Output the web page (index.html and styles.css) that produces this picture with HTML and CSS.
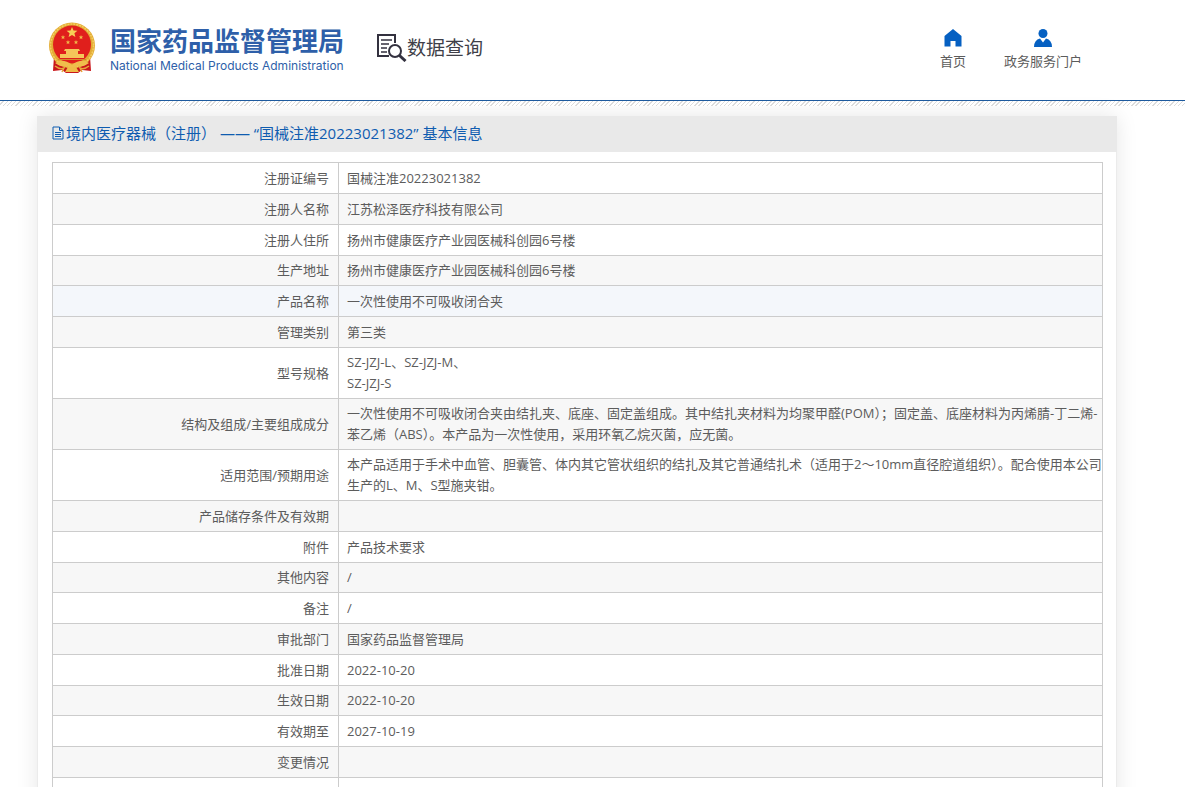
FILE: index.html
```html
<!DOCTYPE html>
<html lang="zh-CN">

<head>
    <meta charset="UTF-8">
    <meta name="viewport" content="width=device-width, initial-scale=1.0">
    <title>国家药品监督管理局 数据查询</title>
    <link rel="stylesheet" href="styles.css">
</head>

<body>
    <header class="header">
        <div class="logo">
            <svg class="emblem" viewBox="0 0 48 52" aria-hidden="true">
                <path d="M6 34 L5 49 L14 48 L18 51 L30 51 L34 48 L43 49 L42 34 Z" fill="#c9161b"/>
                <circle cx="24" cy="23.500" r="23" fill="#e3ab35"/>
                <circle cx="24" cy="23.500" r="21.500" fill="none" stroke="#f3cf62" stroke-width="1.500" stroke-dasharray="2 1"/>
                <circle cx="24" cy="22.500" r="19" fill="#e01f1c"/>
                <path d="M24 5l1.500 3.600 3.900.2-3 2.500 1 3.800-3.400-2.200-3.400 2.200 1-3.800-3-2.500 3.900-.2z" fill="#f7cf56"/>
                <g fill="#f0b848">
                    <path id="star" d="M15 13l.6 1.500 1.600.1-1.200 1 .4 1.600-1.400-.9-1.400.9.4-1.600-1.200-1 1.600-.1z"/>
                    <use href="#star" x="18"/>
                    <use href="#star" x="5" y="5"/>
                    <use href="#star" x="13" y="5"/>
                </g>
                <path d="M17 27h14l1 2H16zM18 29h12v3H18zM12 32h24v4H12z" fill="#f5c65a"/>
                <path d="M10 37.500h28" stroke="#d58a2b" stroke-width="1"/>
                <path d="M11 39q7-1 13 4 6-5 13-4l4 2q-7 5-12 3l-5 3-5-3q-5 2-12-3z" fill="#f0bd4c"/>
                <path d="M20 45h8l3 5H17z" fill="#efbb49"/>
                <path d="M7 44q5 4 9 2l-2 4M41 44q-5 4-9 2l2 4" fill="none" stroke="#e7a63c" stroke-width="1.500"/>
            </svg>
            <div class="logo-text">
                <strong class="logo-cn">国家药品监督管理局</strong>
                <span class="logo-en">National Medical Products Administration</span>
            </div>
        </div>
        <div class="search-title">
            <svg class="search-icon" viewBox="0 0 30 28" aria-hidden="true">
                <g fill="none" stroke="#33313f" stroke-width="2">
                    <path d="M18 9V1H1v21h11"/>
                    <path d="M4 6h11M4 10h8M4 14h6M4 18h6" stroke-width="1.500"/>
                    <circle cx="18" cy="17" r="6"/>
                    <path d="M22.500 21.500l6 5.500" stroke-width="3"/>
                </g>
            </svg>
            <span>数据查询</span>
        </div>
        <nav class="nav">
            <a href="#">
                <svg class="nav-icon" viewBox="0 0 20 18" aria-hidden="true">
                    <path d="M10 0L1.500 7v10.500H7.500V12h5v5.500h6V7z" fill="#0560c2"/>
                </svg>
                首页
            </a>
            <a href="#">
                <svg class="nav-icon" viewBox="0 0 20 18" aria-hidden="true">
                    <circle cx="10" cy="4.500" r="4.500" fill="#0560c2"/>
                    <path d="M1 18q0-7 6-8.500l3 4 3-4q6 1.500 6 8.500z" fill="#0560c2"/>
                </svg>
                政务服务门户
            </a>
        </nav>
    </header>

    <main class="panel">
        <h1 class="panel-title">
            <svg class="doc-icon" viewBox="0 0 12 14" aria-hidden="true">
                <path d="M1 1h6.500L11 4.500V13H1zM7.500 1v3.500H11M3 6.500h6M3 8.500h6M3 10.500h6" fill="none" stroke="#0f5cb0"/>
            </svg>
            <span>境内医疗器械（注册） —— “国械注准20223021382” 基本信息</span>
        </h1>
        <div class="panel-body">
            <table class="info">
                <tbody>
                    <tr><th scope="row">注册证编号</th><td>国械注准20223021382</td></tr>
                    <tr><th scope="row">注册人名称</th><td>江苏松泽医疗科技有限公司</td></tr>
                    <tr><th scope="row">注册人住所</th><td>扬州市健康医疗产业园医械科创园6号楼</td></tr>
                    <tr><th scope="row">生产地址</th><td>扬州市健康医疗产业园医械科创园6号楼</td></tr>
                    <tr class="active"><th scope="row">产品名称</th><td>一次性使用不可吸收闭合夹</td></tr>
                    <tr><th scope="row">管理类别</th><td>第三类</td></tr>
                    <tr><th scope="row">型号规格</th><td>SZ-JZJ-L、SZ-JZJ-M、<br>SZ-JZJ-S</td></tr>
                    <tr><th scope="row">结构及组成/主要组成成分</th><td>一次性使用不可吸收闭合夹由结扎夹、底座、固定盖组成。其中结扎夹材料为均聚甲醛(POM）；固定盖、底座材料为丙烯腈-丁二烯-苯乙烯（ABS）。本产品为一次性使用，采用环氧乙烷灭菌，应无菌。</td></tr>
                    <tr><th scope="row">适用范围/预期用途</th><td>本产品适用于手术中血管、胆囊管、体内其它管状组织的结扎及其它普通结扎术（适用于2～10mm直径腔道组织）。配合使用本公司生产的L、M、S型施夹钳。</td></tr>
                    <tr><th scope="row">产品储存条件及有效期</th><td></td></tr>
                    <tr><th scope="row">附件</th><td>产品技术要求</td></tr>
                    <tr><th scope="row">其他内容</th><td>/</td></tr>
                    <tr><th scope="row">备注</th><td>/</td></tr>
                    <tr><th scope="row">审批部门</th><td>国家药品监督管理局</td></tr>
                    <tr><th scope="row">批准日期</th><td>2022-10-20</td></tr>
                    <tr><th scope="row">生效日期</th><td>2022-10-20</td></tr>
                    <tr><th scope="row">有效期至</th><td>2027-10-19</td></tr>
                    <tr><th scope="row">变更情况</th><td></td></tr>
                    <tr><th scope="row"></th><td></td></tr>
                </tbody>
            </table>
        </div>
    </main>
</body>

</html>
```

FILE: styles.css
```css
* {
    margin: 0;
    padding: 0;
    box-sizing: border-box;
}

html {
    height: 100%;
    overflow: hidden;
}

body {
    font-family: "Open Sans", "Noto Sans CJK SC", sans-serif;
    font-size: 13px;
    line-height: 21px;
    color: #5c5c5c;
    background-color: #fff;
}

.header {
    display: flex;
    align-items: flex-start;
    height: 106px;
    padding: 22px 103px 0 48px;
    background: repeating-linear-gradient(135deg, #fff 0 2px, #dcdcdc 2px 3px) bottom / 100% 5px no-repeat;
    position: relative;
}

/* blue rule above the hatched strip */
.header::after {
    content: "";
    position: absolute;
    left: 0;
    right: 0;
    bottom: 5px;
    height: 1px;
    background-color: #1d5a9e;
}

.logo {
    display: flex;
    gap: 14px;
}

.emblem {
    width: 48px;
    height: 52px;
}

.logo-text {
    display: flex;
    flex-direction: column;
    padding-top: 4px;
    color: #2e5fa9;
    white-space: nowrap;
}

.logo-cn {
    font-size: 26px;
    line-height: 30px;
}

.logo-en {
    font-family: Inter, sans-serif;
    font-size: 12px;
    line-height: 20px;
}

.search-title {
    display: flex;
    align-items: center;
    margin-left: 33px;
    padding-top: 12px;
    font-size: 19px;
    line-height: 28px;
    color: #403f48;
    white-space: nowrap;
}

.search-icon {
    width: 30px;
    height: 28px;
}

.nav {
    display: flex;
    gap: 38px;
    margin-left: auto;
    padding-top: 7px;
}

.nav a {
    display: flex;
    flex-direction: column;
    align-items: center;
    gap: 4px;
    color: #5c5c5c;
    text-decoration: none;
    white-space: nowrap;
}

.nav-icon {
    width: 20px;
    height: 18px;
}

.panel {
    max-width: 1080px;
    margin: 10px 68px 0 37px;
    box-shadow: 0 0 20px rgba(0, 0, 0, 0.1);
}

.panel-title {
    display: flex;
    align-items: center;
    gap: 2px;
    height: 36px;
    padding: 0 15px 2px;
    font-size: 15px;
    font-weight: normal;
    color: #0f5cb0;
    background-color: #e9e9e9;
}

.doc-icon {
    width: 12px;
    height: 14px;
}

.panel-body {
    padding: 10px 13px 20px 14px;
    border: 1px solid #ebebeb;
    border-top: none;
    background-color: #fff;
}

.info {
    width: 100%;
    border-collapse: collapse;
    table-layout: fixed;
}

.info tr {
    height: 31px;
}

.info tr:nth-child(4n) {
    height: 30px;
}

.info tr:nth-child(even) {
    background-color: #f7f7f7;
}

.info tr.active {
    background-color: #f4f7fb;
}

.info th,
.info td {
    padding: 4px 0 4px 8px;
    border: 1px solid #ccc;
    font-weight: normal;
    vertical-align: middle;
}

.info th {
    width: 286px;
    padding-right: 9px;
    text-align: right;
}
```
